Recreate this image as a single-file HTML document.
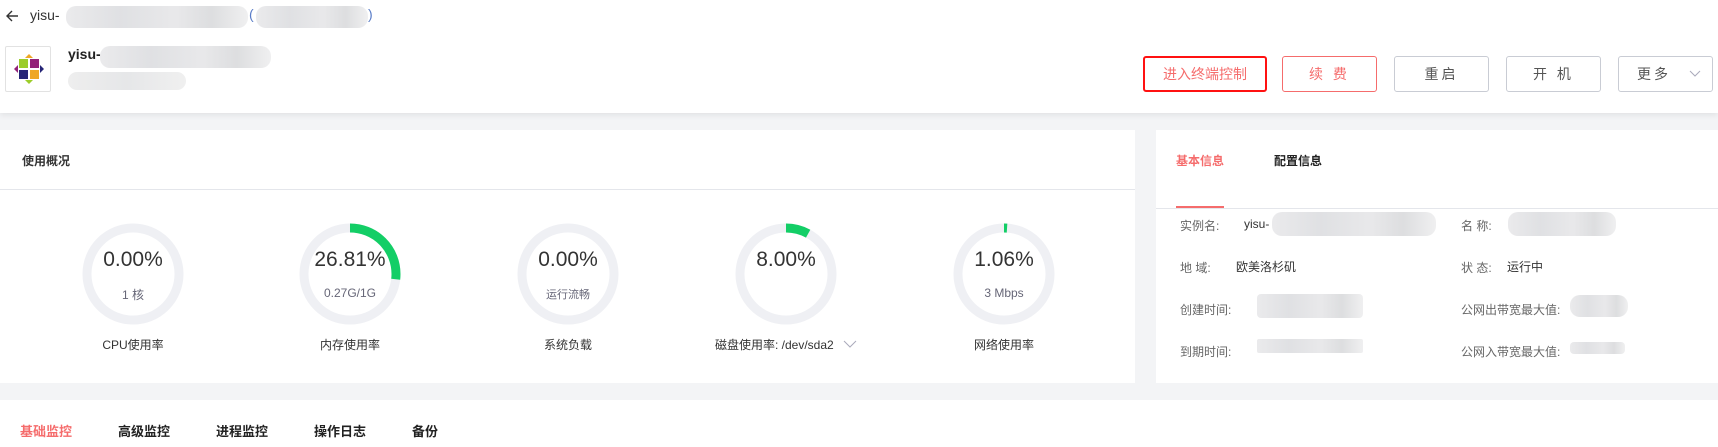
<!DOCTYPE html>
<html><head><meta charset="utf-8"><style>
*{margin:0;padding:0;box-sizing:border-box}
body{width:1718px;height:447px;overflow:hidden;background:#f3f4f6;font-family:"Liberation Sans","Noto Sans CJK SC",sans-serif;color:#333;position:relative}
.a{position:absolute}
.blur{position:absolute;border-radius:10px;background:linear-gradient(90deg,#e8e8ea,#dcdde0 30%,#e6e6e8 60%,#d9dadc 80%,#eeeeef);opacity:.9}
.btn{position:absolute;top:56px;height:36px;border:1px solid #c9ccd4;border-radius:3px;background:#fff;font-size:14px;color:#555;text-align:center;line-height:34px;letter-spacing:3px}
.g{position:absolute;width:120px;margin-left:-60px;text-align:center}
.lab{position:absolute;font-size:12px;color:#666}
.val{position:absolute;font-size:12px;color:#333}
</style></head><body>
<div class="a" style="left:0;top:0;width:1718px;height:113px;background:#fff;box-shadow:0 2px 6px rgba(0,0,0,.08)"></div>
<svg class="a" style="left:5px;top:9px" width="14" height="14" viewBox="0 0 14 14"><path d="M13 7H2M7 2L2 7l5 5" stroke="#333" stroke-width="1.4" fill="none"/></svg>
<div class="a" style="left:30px;top:7px;font-size:14px;color:#333">yisu-</div>
<div class="blur" style="left:66px;top:6px;width:182px;height:22px"></div>
<div class="a" style="left:249px;top:6px;font-size:14px;color:#5a7dc8">(</div>
<div class="blur" style="left:256px;top:6px;width:112px;height:22px"></div>
<div class="a" style="left:368px;top:6px;font-size:14px;color:#5a7dc8">)</div>
<div class="a" style="left:5px;top:46px;width:46px;height:46px;border:1px solid #e2e2e2;border-radius:2px;background:#fff"></div>
<svg class="a" style="left:13px;top:53px" width="32" height="32" viewBox="0 0 32 32">
<polygon points="16,1 31,16 16,31 1,16" fill="#fff"/>
<rect x="6" y="6" width="9" height="9" fill="#9ccd2a"/><rect x="17" y="6" width="9" height="9" fill="#932279"/>
<rect x="6" y="17" width="9" height="9" fill="#262577"/><rect x="17" y="17" width="9" height="9" fill="#efa724"/>
<polygon points="16,1 12,5 20,5" fill="#efa724"/><polygon points="31,16 27,12 27,20" fill="#262577"/>
<polygon points="16,31 12,27 20,27" fill="#9ccd2a"/><polygon points="1,16 5,12 5,20" fill="#932279"/>
</svg>
<div class="a" style="left:68px;top:46px;font-size:14px;font-weight:bold;color:#222">yisu-</div>
<div class="blur" style="left:100px;top:46px;width:171px;height:22px"></div>
<div class="blur" style="left:68px;top:72px;width:118px;height:18px;background:linear-gradient(90deg,#ececec,#e3e4e6,#eeeeee)"></div>
<div class="btn" style="left:1143px;width:124px;border:2px solid #f11;color:#f56c6c;letter-spacing:0;line-height:32px">进入终端控制</div>
<div class="btn" style="left:1282px;width:95px;border-color:#f56c6c;color:#f56c6c">续 费</div>
<div class="btn" style="left:1394px;width:95px">重启</div>
<div class="btn" style="left:1506px;width:95px">开 机</div>
<div class="btn" style="left:1618px;width:95px;text-align:left;padding-left:18px">更多<svg class="a" style="left:70px;top:13px" width="12" height="8" viewBox="0 0 12 8"><path d="M1 1l5 5 5-5" stroke="#aab" fill="none"/></svg></div>

<div class="a" style="left:0;top:130px;width:1135px;height:253px;background:#fff"></div>
<div class="a" style="left:22px;top:152px;font-size:12px;font-weight:bold;color:#333">使用概况</div>
<div class="a" style="left:0;top:189px;width:1135px;height:1px;background:#e4e6eb"></div>
<svg class="a" style="left:0;top:190px" width="1135" height="170">
<g fill="none" stroke-width="9" stroke="#eff0f4">
<circle cx="133" cy="84" r="46"/><circle cx="350" cy="84" r="46"/><circle cx="568" cy="84" r="46"/><circle cx="786" cy="84" r="46"/><circle cx="1004" cy="84" r="46"/></g>
<g fill="none" stroke-width="9" stroke="#13ce66">
<circle cx="350" cy="84" r="46" stroke-dasharray="77.5 300" transform="rotate(-90 350 84)"/>
<circle cx="786" cy="84" r="46" stroke-dasharray="23.1 300" transform="rotate(-90 786 84)"/>
<circle cx="1004" cy="84" r="46" stroke-dasharray="3.1 300" transform="rotate(-90 1004 84)"/></g>
</svg>
<div class="g" style="left:133px;top:248px;font-size:21px;color:#333">0.00%</div>
<div class="g" style="left:350px;top:248px;font-size:21px;color:#333">26.81%</div>
<div class="g" style="left:568px;top:248px;font-size:21px;color:#333">0.00%</div>
<div class="g" style="left:786px;top:248px;font-size:21px;color:#333">8.00%</div>
<div class="g" style="left:1004px;top:248px;font-size:21px;color:#333">1.06%</div>
<div class="g" style="left:133px;top:286px;font-size:12px;color:#667">1 核</div>
<div class="g" style="left:350px;top:286px;font-size:12px;color:#667">0.27G/1G</div>
<div class="g" style="left:568px;top:286px;font-size:11px;color:#667">运行流畅</div>
<div class="g" style="left:1004px;top:286px;font-size:12px;color:#667">3 Mbps</div>
<div class="g" style="left:133px;top:336px;font-size:12px">CPU使用率</div>
<div class="g" style="left:350px;top:336px;font-size:12px">内存使用率</div>
<div class="g" style="left:568px;top:336px;font-size:12px">系统负载</div>
<div class="g" style="left:786px;top:336px;font-size:12px;width:200px;margin-left:-100px">磁盘使用率: /dev/sda2 <svg width="14" height="9" viewBox="0 0 14 9" style="margin-left:6px"><path d="M1 1l6 6 6-6" stroke="#aab" fill="none"/></svg></div>
<div class="g" style="left:1004px;top:336px;font-size:12px">网络使用率</div>

<div class="a" style="left:1156px;top:130px;width:562px;height:253px;background:#fff"></div>
<div class="a" style="left:1176px;top:152px;font-size:12px;font-weight:bold;color:#f56c6c">基本信息</div>
<div class="a" style="left:1274px;top:152px;font-size:12px;font-weight:bold;color:#222">配置信息</div>
<div class="a" style="left:1156px;top:208px;width:562px;height:1px;background:#e4e6eb"></div>
<div class="a" style="left:1176px;top:206px;width:48px;height:2px;background:#f56c6c"></div>
<div class="lab" style="left:1180px;top:217px">实例名:</div><div class="val" style="left:1244px;top:217px">yisu-</div><div class="blur" style="left:1272px;top:212px;width:164px;height:24px"></div>
<div class="lab" style="left:1461px;top:217px">名 称:</div><div class="blur" style="left:1508px;top:212px;width:108px;height:24px"></div>
<div class="lab" style="left:1180px;top:259px">地 域:</div><div class="val" style="left:1236px;top:258px">欧美洛杉矶</div>
<div class="lab" style="left:1461px;top:259px">状 态:</div><div class="val" style="left:1507px;top:258px">运行中</div>
<div class="lab" style="left:1180px;top:301px">创建时间:</div><div class="blur" style="left:1257px;top:294px;width:106px;height:24px;border-radius:4px"></div>
<div class="lab" style="left:1461px;top:301px">公网出带宽最大值:</div><div class="blur" style="left:1570px;top:295px;width:58px;height:22px"></div>
<div class="lab" style="left:1180px;top:343px">到期时间:</div><div class="blur" style="left:1257px;top:339px;width:106px;height:14px;border-radius:2px"></div>
<div class="lab" style="left:1461px;top:343px">公网入带宽最大值:</div><div class="blur" style="left:1570px;top:342px;width:55px;height:12px;border-radius:4px"></div>

<div class="a" style="left:0;top:400px;width:1718px;height:47px;background:#fff"></div>
<div class="a" style="left:20px;top:421px;font-size:13px;font-weight:bold;color:#f56c6c">基础监控</div>
<div class="a" style="left:118px;top:421px;font-size:13px;font-weight:bold;color:#222">高级监控</div>
<div class="a" style="left:216px;top:421px;font-size:13px;font-weight:bold;color:#222">进程监控</div>
<div class="a" style="left:314px;top:421px;font-size:13px;font-weight:bold;color:#222">操作日志</div>
<div class="a" style="left:412px;top:421px;font-size:13px;font-weight:bold;color:#222">备份</div>
</body></html>
